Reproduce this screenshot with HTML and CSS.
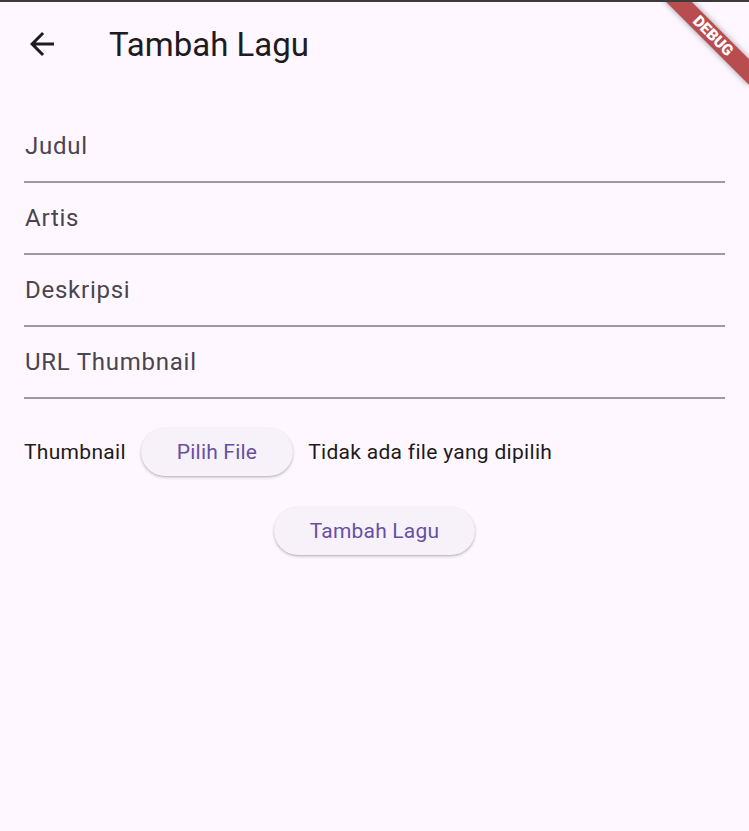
FILE: index.html
```html
<!DOCTYPE html>
<html lang="id">
<head>
<meta charset="utf-8">
<title>Tambah Lagu</title>
<link rel="stylesheet" href="styles.css">
</head>
<body>
<div class="screen">
  <header class="appbar">
    <button class="back" aria-label="Kembali">
      <svg width="36" height="36" viewBox="0 0 24 24"><path d="M20 11H7.83l5.59-5.59L12 4l-8 8 8 8 1.41-1.41L7.83 13H20v-2z" fill="#1d1b20"/></svg>
    </button>
    <h1 class="title">Tambah Lagu</h1>
  </header>
  <main class="form">
    <div class="field"><span class="label">Judul</span></div>
    <div class="field"><span class="label">Artis</span></div>
    <div class="field"><span class="label">Deskripsi</span></div>
    <div class="field"><span class="label">URL Thumbnail</span></div>
    <div class="file-row">
      <span class="text">Thumbnail</span>
      <button class="pill">Pilih File</button>
      <span class="text">Tidak ada file yang dipilih</span>
    </div>
    <div class="submit-row">
      <button class="pill">Tambah Lagu</button>
    </div>
  </main>
  <div class="debug-banner">DEBUG</div>
</div>
</body>
</html>
```
FILE: styles.css
```css
html, body {
  margin: 0;
  padding: 0;
  background: #fef7ff;
}
body {
  font-family: Roboto, "Noto Sans", sans-serif;
  color: #1d1b20;
}
.screen {
  position: relative;
  width: 749px;
  height: 831px;
  box-sizing: border-box;
  border-top: 2px solid #3a3a3a;
  overflow: hidden;
  background: #fef7ff;
}
.appbar {
  height: 84px;
  display: flex;
  align-items: center;
  padding-left: 24px;
}
.back {
  width: 36px;
  height: 36px;
  padding: 0;
  border: 0;
  background: none;
  display: flex;
}
.title {
  margin: 0 0 0 49px;
  font-size: 33px;
  font-weight: 400;
  color: #1d1b20;
}
.form {
  padding: 25px 24px 0;
}
.field {
  height: 72px;
  box-sizing: border-box;
  border-bottom: 2px solid #9e99a1;
  padding-top: 21px;
}
.label {
  display: block;
  font-size: 24px;
  line-height: 28px;
  letter-spacing: 0.75px;
  color: #49454f;
  padding-left: 1px;
}
.file-row {
  margin-top: 29px;
  height: 48px;
  display: flex;
  align-items: center;
  gap: 15px;
}
.text {
  font-size: 21px;
  letter-spacing: 0.3px;
  color: #1d1b20;
}
.pill {
  height: 48px;
  padding: 0 36px;
  border: 0;
  border-radius: 24px;
  background: #f7f2fa;
  color: #6750a4;
  font-family: Roboto, "Noto Sans", sans-serif;
  font-size: 21px;
  font-weight: 400;
  letter-spacing: 0.2px;
  box-shadow: 0 1.5px 3px rgba(0, 0, 0, 0.22), 0 0.5px 1px rgba(0, 0, 0, 0.12);
}
.submit-row {
  margin-top: 31px;
  display: flex;
  justify-content: center;
}
.debug-banner {
  position: absolute;
  left: 653px;
  top: 25px;
  width: 120px;
  height: 18px;
  transform: rotate(45deg);
  background: rgba(168, 32, 34, 0.8);
  color: #fff;
  font-family: Roboto, sans-serif;
  font-weight: 900;
  font-size: 15.5px;
  line-height: 18px;
  text-align: center;
  box-shadow: 0 0 6px rgba(0, 0, 0, 0.4);
}
```
